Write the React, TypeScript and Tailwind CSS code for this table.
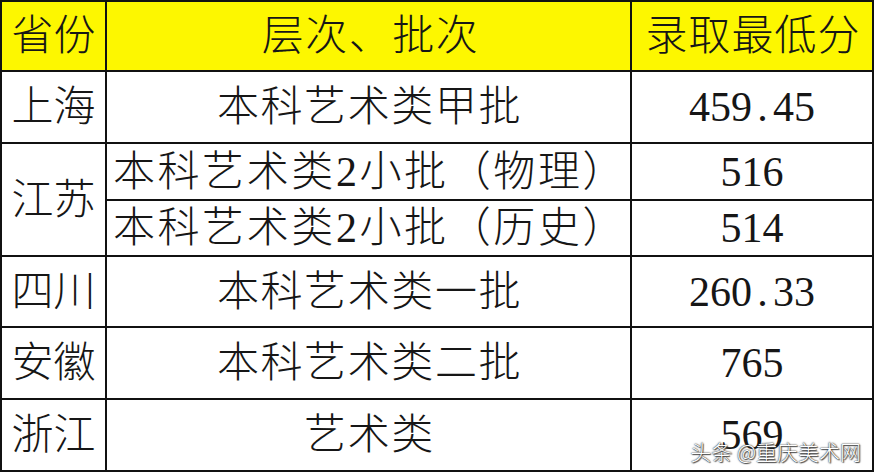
const FONT = "font-['Liberation_Serif','Noto_Sans_CJK_SC',serif]";

type Row = { province: string; span?: number; batch: string; score: string };

const ROWS: Row[] = [
  { province: "上海", batch: "本科艺术类甲批", score: "459.45" },
  { province: "江苏", span: 2, batch: "本科艺术类2小批（物理）", score: "516" },
  { province: "", batch: "本科艺术类2小批（历史）", score: "514" },
  { province: "四川", batch: "本科艺术类一批", score: "260.33" },
  { province: "安徽", batch: "本科艺术类二批", score: "765" },
  { province: "浙江", batch: "艺术类", score: "569" },
];

// row heights include the bottom border line
const HEIGHTS = ["h-[72px]", "h-[57px]", "h-[56px]", "h-[71px]", "h-[72px]", "h-[72px]"];

// SimSun style: every ascii char takes half an em, the dot too
function Score({ value }: { value: string }) {
  return (
    <span className="flex">
      {value.split("").map((c, i) => (
        <span key={i} className="inline-block w-[21px] text-center">
          {c}
        </span>
      ))}
    </span>
  );
}

const cell = "flex items-center justify-center border-r-2 border-b-2 border-[#111]";

export default function App() {
  return (
    <div className={`relative w-[876px] h-[474px] bg-white text-[#161616] text-[42px] leading-none font-light ${FONT}`}>
      <div className="grid grid-cols-[105px_525px_242px] w-[874px] border-t-2 border-l-2 border-[#111]">
        <div className={`${cell} h-[70px] bg-[#fdf700]`}>省份</div>
        <div className={`${cell} h-[70px] bg-[#fdf700] tracking-[1.5px] pl-[4px]`}>层次、批次</div>
        <div className={`${cell} h-[70px] bg-[#fdf700] tracking-[1px] pl-[2px]`}>录取最低分</div>

        {ROWS.map((r, i) => (
          <div key={i} className="contents">
            {r.province && (
              <div className={`${cell} ${r.span === 2 ? "row-span-2" : HEIGHTS[i]}`}>{r.province}</div>
            )}
            <div
              className={`${cell} ${HEIGHTS[i]} ${
                r.span === 2 || (i === 2) ? "tracking-[2.6px] pl-[3px]" : "tracking-[1.6px] pl-[2px]"
              }`}
            >
              {r.batch}
            </div>
            <div className={`${cell} ${HEIGHTS[i]}`}>
              <Score value={r.score} />
            </div>
          </div>
        ))}
      </div>

      <div className="absolute right-[15px] bottom-[12px] text-[21px] leading-none text-white font-['Noto_Sans_CJK_SC',sans-serif] [text-shadow:0_0_1px_#333,0_0_2px_#333,1px_1px_1px_#555]">
        头条 @重庆美术网
      </div>
    </div>
  );
}
